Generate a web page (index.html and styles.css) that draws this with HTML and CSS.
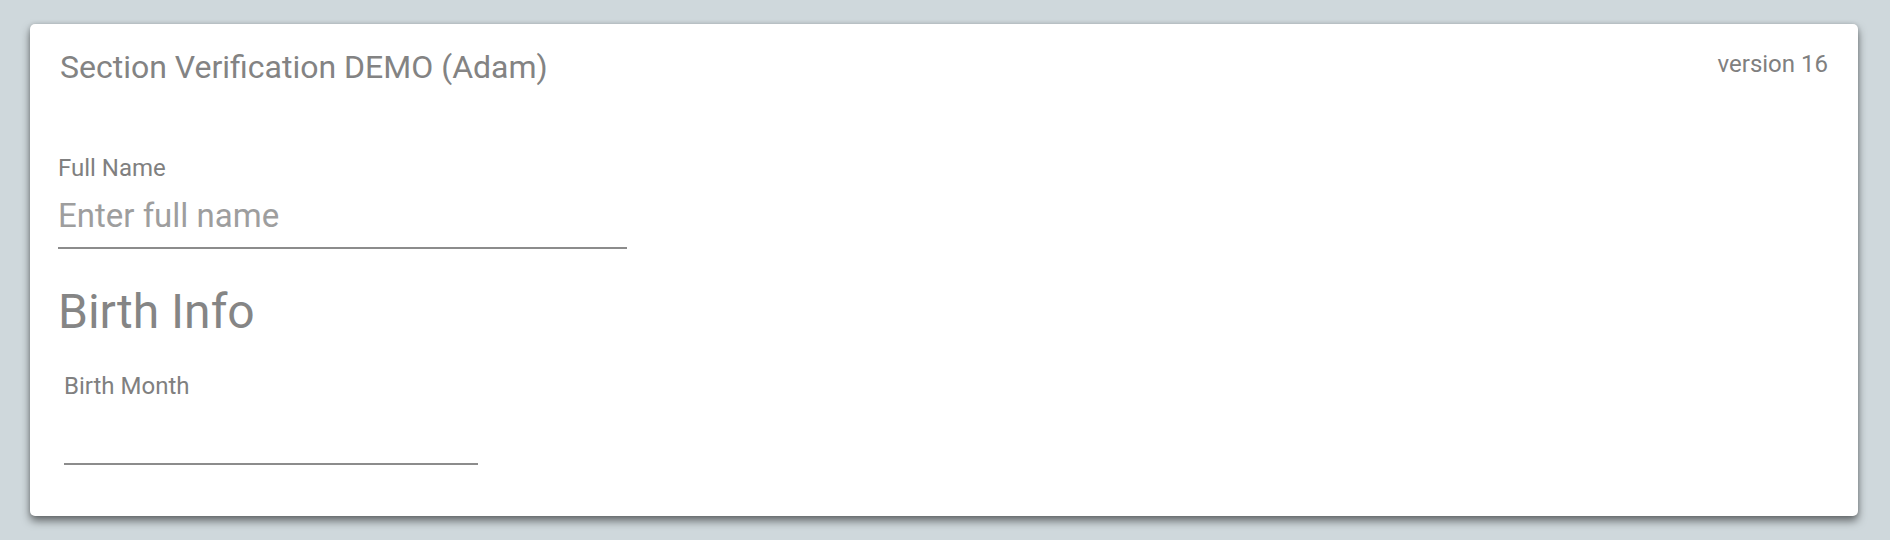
FILE: index.html
```html
<!DOCTYPE html>
<html lang="en">
<head>
  <meta charset="UTF-8" />
  <meta name="viewport" content="width=device-width, initial-scale=1.0"/>
  <title>Section Verification DEMO</title>
  <link rel="stylesheet" href="styles.css">
</head>
<body>

<div class="card">
  <div class="card-header">
    <h2 class="title">Section Verification DEMO (Adam)</h2>
    <span class="version">version 16</span>
  </div>

  <div class="field">
    <label for="nome">Full Name</label>
    <input id="nome" class="text-input" placeholder="Enter full name" />
  </div>

  <h3 class="section-title">Birth Info</h3>

  <div class="field field-indent">
    <label for="mes">Birth Month</label>
    <select id="mes" class="select-input">
      <option value=""></option>
    </select>
  </div>
</div>

</body>
</html>
```

FILE: styles.css
```css
body {
  font-family: Roboto, "Liberation Sans", sans-serif;
  background: #cfd8dc;
  margin: 0;
  padding: 24px 32px 24px 30px;
}

.card {
  background: white;
  border-radius: 5px;
  padding: 24px 30px 51px 28px;
  box-shadow: 0 5px 9px rgba(0, 0, 0, 0.5), 0 0 4px rgba(0, 0, 0, 0.15);
}

.card-header {
  display: flex;
  justify-content: space-between;
  align-items: flex-start;
}

.title {
  margin: 0 0 0 2px;
  font-size: 32px;
  font-weight: 400;
  line-height: 1.2;
  color: #838383;
}

.version {
  margin-top: 2px;
  font-size: 24px;
  line-height: 1.2;
  color: #808080;
}

.field {
  display: flex;
  flex-direction: column;
  align-items: flex-start;
}

.field label {
  font-size: 24px;
  line-height: 1.2;
  color: #808080;
}

.card-header + .field {
  margin-top: 68px;
}

.text-input {
  width: 569px;
  height: 64px;
  padding: 0;
  margin: 0;
  border: none;
  border-bottom: 2px solid #8c8c8c;
  font-family: inherit;
  font-size: 33px;
  color: #555;
  outline: none;
  background: transparent;
}

.text-input::placeholder {
  color: #9e9e9e;
}

.section-title {
  margin: 34px 0 0 0;
  font-size: 48px;
  font-weight: 400;
  line-height: 1.2;
  color: #858585;
}

.field-indent {
  margin: 31px 0 0 6px;
}

.select-input {
  appearance: none;
  width: 414px;
  height: 64px;
  padding: 0;
  margin: 0;
  border: none;
  border-radius: 0;
  border-bottom: 2px solid #8c8c8c;
  background: transparent;
  font-family: inherit;
  font-size: 24px;
  outline: none;
}
```
